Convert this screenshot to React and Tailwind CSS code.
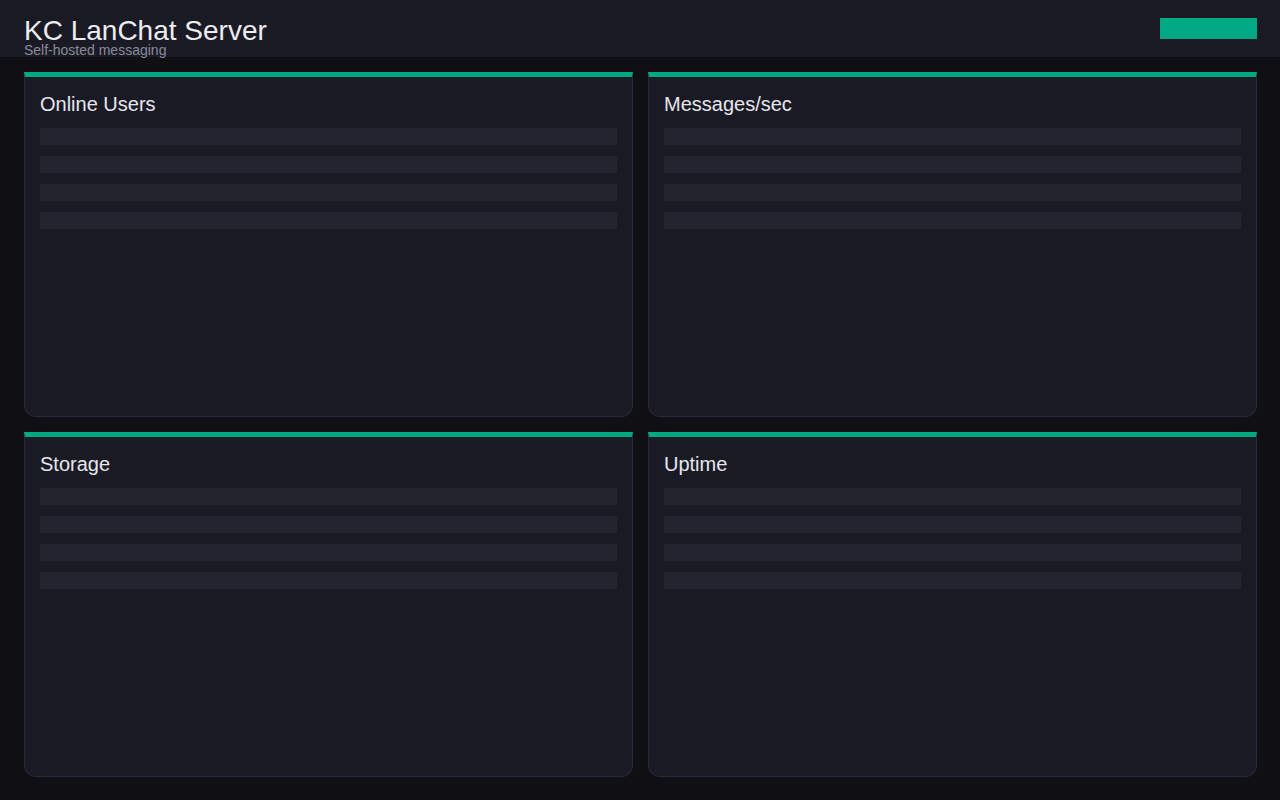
import React from 'react';

const cards = ['Online Users', 'Messages/sec', 'Storage', 'Uptime'];

const Card = ({ title }) => (
    <div className="flex flex-col bg-[#1a1a24] border border-[#2a2a38] border-t-[5px] border-t-[#00a884] rounded-b-xl px-[15px] pt-[13px]">
        <h3 className="text-[20px] leading-[28px] text-[#e6e6ee]">{title}</h3>
        <div className="mt-[10px] flex flex-col gap-[11px]">
            {[0, 1, 2, 3].map((i) => (
                <div key={i} className="h-[17px] bg-[#242430]" />
            ))}
        </div>
    </div>
);

export default function App() {
    return (
        <div className="w-[1280px] h-[800px] bg-[#101014] flex flex-col font-['Liberation_Sans',Arial,sans-serif]">
            <header className="h-[57px] shrink-0 bg-[#1a1a24] pl-6 pr-[23px] pt-[18px] flex justify-between items-start">
                <div className="flex flex-col">
                    <h1 className="text-[28px] leading-[25px] text-[#ececf2]">KC LanChat Server</h1>
                    <p className="text-[14px] leading-[14px] text-[#8a8a9c]">Self-hosted messaging</p>
                </div>
                <button className="w-[97px] h-[21px] bg-[#00a884]" />
            </header>
            <main className="flex-1 grid grid-cols-2 grid-rows-2 gap-[15px] pl-6 pr-[23px] pt-[15px] pb-[23px]">
                {cards.map((c) => (
                    <Card key={c} title={c} />
                ))}
            </main>
        </div>
    );
}
